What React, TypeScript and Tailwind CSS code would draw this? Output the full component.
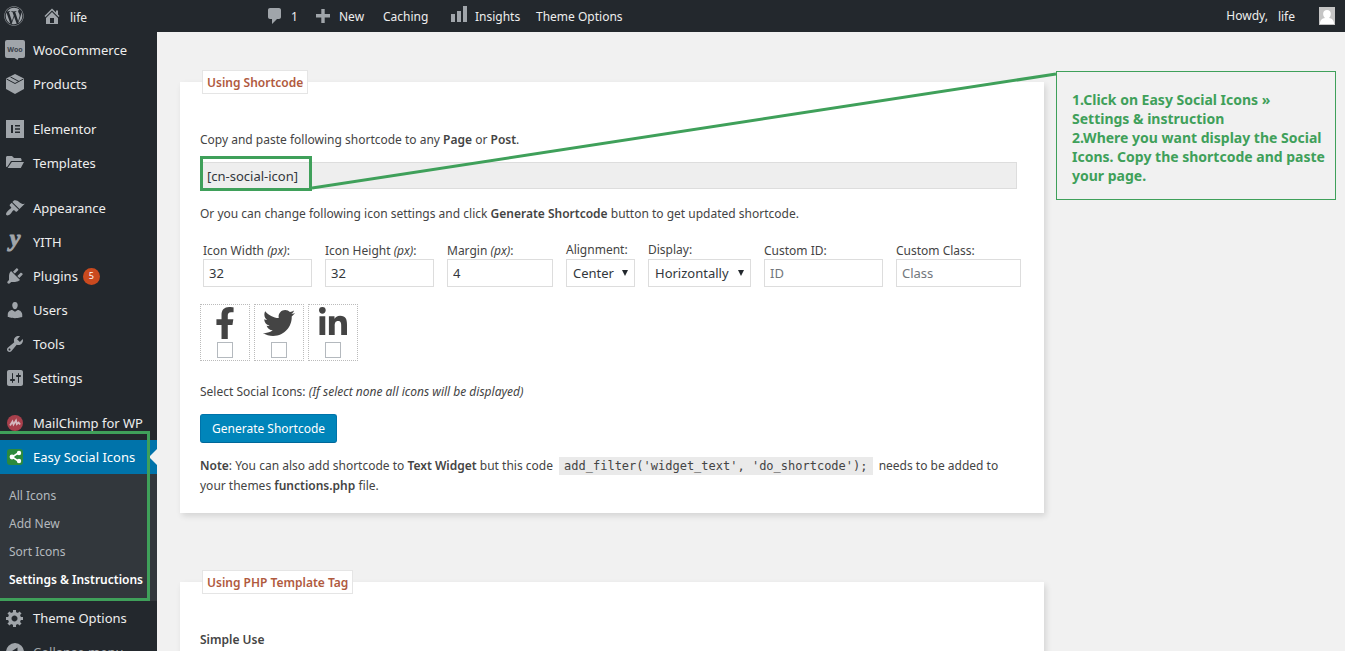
import React, { useState } from 'react';
import { FaFacebookF, FaTwitter, FaLinkedinIn, FaWordpress } from 'react-icons/fa';

const paths = {
  home: 'M16 8.5l1.53 1.53-1.06 1.06L10 4.6l-6.47 6.49-1.06-1.06L10 2.5l4 4v-2h2v4zm-6-2.46l6 5.99V18H4v-5.97zM12 17v-5H8v5h4z',
  comment: 'M5 2h9c1.1 0 2 .9 2 2v7c0 1.1-.9 2-2 2h-2l-5 5v-5H5c-1.1 0-2-.9-2-2V4c0-1.1.9-2 2-2z',
  plus: 'M17 8v3.5h-5.3V17H8.3v-5.5H3V8h5.3V3h3.4v5z',
  chart: 'M18 18V2h-4v16h4zm-6 0V7H8v11h4zm-6 0v-8H2v8h4z',
  appearance:
    'M14.48 11.06L7.41 3.99l1.5-1.5c.5-.56 2.3-.47 3.51.32 1.21.8 1.43 1.28 2.91 2.1 1.18.64 2.45 1.26 4.45.85zm-.71.71L6.7 4.7 4.93 6.47c-.39.39-.39 1.02 0 1.41l1.06 1.06c.39.39.39 1.03 0 1.42-.6.6-1.43 1.11-2.21 1.69-.35.26-.7.53-1.01.84C1.43 14.23.4 16.08 1.4 17.07c.99 1 2.84-.03 4.18-1.36.31-.31.58-.66.85-1.02.57-.78 1.08-1.61 1.69-2.21.39-.39 1.02-.39 1.41 0l1.06 1.06c.39.39 1.02.39 1.41 0z',
  plugins:
    'M13.11 4.36L9.87 7.6 8 5.73l3.24-3.24c.35-.34 1.05-.2 1.56.32.52.51.66 1.21.31 1.55zm-8 1.77l.91-1.12 9.01 9.01-1.19.84c-.71.71-2.63 1.16-3.82 1.16H6.14L4.9 17.26c-.59.59-1.54.59-2.12 0-.59-.58-.59-1.53 0-2.12l1.24-1.24v-3.88c0-1.13.4-3.19 1.09-3.89zm7.26 3.97l3.24-3.24c.34-.35 1.04-.21 1.55.31.52.51.66 1.21.31 1.55l-3.24 3.25z',
  users:
    'M10 9.25c-2.27 0-2.73-3.44-2.73-3.44C7 4.02 7.82 2 9.97 2c2.16 0 2.98 2.02 2.71 3.81 0 0-.41 3.44-2.68 3.44zm0 2.57L12.72 10c2.39 0 4.52 2.33 4.52 4.53v2.49s-3.65 1.13-7.24 1.13c-3.65 0-7.24-1.13-7.24-1.13v-2.49c0-2.25 1.94-4.48 4.47-4.48z',
  tools:
    'M16.68 9.77c-1.34 1.34-3.3 1.67-4.95.99l-5.41 6.52c-.99.99-2.59.99-3.58 0s-.99-2.59 0-3.57l6.52-5.42c-.68-1.65-.35-3.61.99-4.95 1.28-1.28 3.12-1.62 4.72-1.06l-2.89 2.89 2.82 2.82 2.86-2.87c.53 1.58.18 3.39-1.08 4.65zM3.81 16.21c.4.39 1.04.39 1.43 0 .4-.4.4-1.04 0-1.43-.39-.4-1.03-.4-1.43 0-.39.39-.39 1.03 0 1.43z',
  settings:
    'M18 16V4c0-1.1-.9-2-2-2H4c-1.1 0-2 .9-2 2v12c0 1.1.9 2 2 2h12c1.1 0 2-.9 2-2zM8 11h1c.55 0 1 .45 1 1s-.45 1-1 1H8v1.5c0 .28-.22.5-.5.5s-.5-.22-.5-.5V13H6c-.55 0-1-.45-1-1s.45-1 1-1h1V5.5c0-.28.22-.5.5-.5s.5.22.5.5V11zm5-2h-1c-.55 0-1-.45-1-1s.45-1 1-1h1V5.5c0-.28.22-.5.5-.5s.5.22.5.5V7h1c.55 0 1 .45 1 1s-.45 1-1 1h-1v5.5c0 .28-.22.5-.5.5s-.5-.22-.5-.5V9z',
  generic:
    'M18 12h-2.18c-.17.7-.44 1.35-.81 1.93l1.54 1.54-2.1 2.1-1.54-1.54c-.58.36-1.23.63-1.91.79V19H8v-2.18c-.68-.16-1.33-.43-1.91-.79l-1.54 1.54-2.12-2.12 1.54-1.54c-.36-.58-.63-1.23-.79-1.91H1V9.03h2.17c.16-.7.44-1.35.8-1.94L2.43 5.55l2.1-2.1 1.54 1.54c.58-.37 1.24-.64 1.93-.81V2h3v2.18c.68.16 1.33.43 1.91.79l1.54-1.54 2.12 2.12-1.54 1.54c.36.59.64 1.24.8 1.94H18V12zm-8.5 1.5c1.66 0 3-1.34 3-3s-1.34-3-3-3-3 1.34-3 3 1.34 3 3 3z',
  collapse: 'M10 1a9 9 0 1 0 0 18 9 9 0 0 0 0-18zm2.5 4.5v9L5.5 10z',
  folder: 'M1 4.500C1 3.700 1.600 3 2.500 3H7l2 2h6c.8 0 1.500.6 1.500 1.500V8H6L2.500 13.500 1 14zM6.800 9H19l-3.200 6H2.600z',
};

const Icon: React.FC<{ name: keyof typeof paths }> = ({ name }) => (
  <svg viewBox="0 0 20 20" className="w-5 h-5 shrink-0" fill="currentColor" fillRule="evenodd">
    <path d={paths[name]} />
  </svg>
);

const WooIcon = () => (
  <svg viewBox="0 0 20 20" className="w-5 h-5 shrink-0">
    <path d="M2 0h16a2 2 0 0 1 2 2v14a2 2 0 0 1-2 2h-4.500l-1 2-3-2H2a2 2 0 0 1-2-2V2a2 2 0 0 1 2-2z" fill="#a0a5aa" />
    <text x="10" y="11.500" textAnchor="middle" fontSize="7" fontWeight="700" fill="#3c434a">Woo</text>
  </svg>
);

const BoxIcon = () => (
  <svg viewBox="0 0 20 20" className="w-5 h-5 shrink-0">
    <path d="M10 0l9 4.500v10.500L10 20l-9-5V4.500z" fill="#a0a5aa" />
    <path d="M1.500 5L10 9.500l8.500-4.500M5.500 3l8.500 4.500" fill="none" stroke="#23282d" />
  </svg>
);

const ElementorIcon = () => (
  <svg viewBox="0 0 20 20" className="w-5 h-5 shrink-0">
    <path d="M1 1h18v18H1z" fill="#a0a5aa" />
    <path d="M6 6h2v8H6zM10 6h5v1.500h-5zM10 9.200h5v1.600h-5zM10 12.500h5V14h-5z" fill="#23282d" />
  </svg>
);

const YithIcon = () => (
  <svg viewBox="0 0 20 20" className="w-5 h-5 shrink-0">
    <text x="10" y="14" textAnchor="middle" fontSize="24" fontWeight="700" fontStyle="italic" fontFamily="Liberation Serif, serif" fill="#a0a5aa" stroke="#a0a5aa">y</text>
  </svg>
);

const MailChimpIcon = () => (
  <svg viewBox="0 0 20 20" className="w-5 h-5 shrink-0">
    <circle cx="10" cy="10" r="8" fill="#a8404c" />
    <path d="M5 12.500l2.500-4 1 3 2.500-4 .8 3.500 1.800-1.500 1.500 2" fill="none" stroke="#d5b9bf" strokeWidth="1.800" />
  </svg>
);

const ShareIcon = () => (
  <svg viewBox="0 0 20 20" className="w-5 h-5 shrink-0">
    <rect x="2" y="2" width="16" height="16" rx="3" fill="#2c8a3c" />
    <path d="M14 5.500L7 10l7 4.500" fill="none" stroke="#fff" strokeWidth="1.500" />
    <circle cx="14" cy="6" r="2.200" fill="#fff" />
    <circle cx="7" cy="10" r="2.400" fill="#fff" />
    <circle cx="14" cy="14" r="2.200" fill="#fff" />
  </svg>
);

interface MenuItem {
  label: string;
  icon: React.ReactNode;
  badge?: string;
}

const menuGroups: MenuItem[][] = [
  [
    { label: 'WooCommerce', icon: <WooIcon /> },
    { label: 'Products', icon: <BoxIcon /> },
  ],
  [
    { label: 'Elementor', icon: <ElementorIcon /> },
    { label: 'Templates', icon: <Icon name="folder" /> },
  ],
  [
    { label: 'Appearance', icon: <Icon name="appearance" /> },
    { label: 'YITH', icon: <YithIcon /> },
    { label: 'Plugins', icon: <Icon name="plugins" />, badge: '5' },
    { label: 'Users', icon: <Icon name="users" /> },
    { label: 'Tools', icon: <Icon name="tools" /> },
    { label: 'Settings', icon: <Icon name="settings" /> },
  ],
  [{ label: 'MailChimp for WP', icon: <MailChimpIcon /> }],
];

const submenu = ['All Icons', 'Add New', 'Sort Icons', 'Settings & Instructions'];

const MenuLink: React.FC<MenuItem> = ({ label, icon, badge }) => (
  <a href="#" className="flex items-center h-[34px] pl-[5px] gap-2 text-[13px] whitespace-nowrap text-[#eee]">
    <span className="text-[#a0a5aa]">{icon}</span>
    <span className="pt-0.5">{label}</span>
    {badge && (
      <span className="flex items-center justify-center w-[17px] h-[17px] -ml-[3px] rounded-full bg-[#ca4a1f] text-[9px] text-white">
        {badge}
      </span>
    )}
  </a>
);

const Sidebar = () => (
  <nav className="w-[157px] shrink-0 bg-[#23282d] pt-px">
    <div className="flex flex-col gap-[11px]">
      {menuGroups.map((group, i) => (
        <div key={i}>
          {group.map(item => (
            <MenuLink key={item.label} {...item} />
          ))}
        </div>
      ))}
    </div>
    <div className="relative">
      <a href="#" className="relative flex items-center h-[34px] pl-[5px] gap-2 text-[13px] whitespace-nowrap bg-[#0073aa] text-white">
        <ShareIcon />
        <span className="pt-0.5">Easy Social Icons</span>
        <span className="absolute right-0 top-[9px] border-y-8 border-r-8 border-y-transparent border-r-[#f1f1f1]" />
      </a>
      <ul className="bg-[#32373c] pt-2 pb-[7px] pl-[9px] text-[12px] leading-7 whitespace-nowrap">
        {submenu.map((label, i) => (
          <li key={label}>
            <a href="#" className={i === 3 ? 'font-semibold text-white' : 'text-[#b4b9be]'}>{label}</a>
          </li>
        ))}
      </ul>
      <div className="absolute left-0 right-[7px] -top-[9px] bottom-0 border-y-[3px] border-r-[3px] border-[#3fa05a] pointer-events-none" />
    </div>
    <MenuLink label="Theme Options" icon={<Icon name="generic" />} />
    <button type="button" className="flex items-center h-[34px] pl-[5px] gap-2 text-[13px] text-[#a0a5aa]">
      <Icon name="collapse" />
      <span className="pt-0.5">Collapse menu</span>
    </button>
  </nav>
);

const AdminBar = () => (
  <header className="flex items-center h-8 shrink-0 bg-[#23282d] text-[#eee] text-[12px] pl-1 pr-2.5 whitespace-nowrap">
    <a href="#" aria-label="WordPress" className="text-[#a0a5aa]"><FaWordpress className="w-5 h-5" /></a>
    <a href="#" className="flex items-center gap-2 ml-[18px] w-[223px]">
      <span className="text-[#a0a5aa]"><Icon name="home" /></span>
      <span className="pt-1">life</span>
    </a>
    <a href="#" className="flex items-center gap-1.5 w-[48px]">
      <span className="text-[#a0a5aa]"><Icon name="comment" /></span>
      <span className="pt-0.5">1</span>
    </a>
    <a href="#" className="flex items-center gap-[6px] w-[70px]">
      <span className="text-[#a0a5aa]"><Icon name="plus" /></span>
      <span className="pt-0.5">New</span>
    </a>
    <a href="#" className="w-[66px] pt-0.5">Caching</a>
    <a href="#" className="flex items-center gap-1.5 w-[87px]">
      <span className="text-[#a0a5aa] pb-1"><Icon name="chart" /></span>
      <span className="pt-0.5">Insights</span>
    </a>
    <a href="#" className="pt-0.5">Theme Options</a>
    <a href="#" className="flex items-center ml-auto">
      Howdy,<span className="ml-2.5 mr-6 pt-0.5">life</span>
      <svg viewBox="0 0 16 18" className="w-4 h-[18px]">
        <path d="M0 0h16v18H0z" fill="#c5c5c5" />
        <path d="M8 3c5 0 4.500 6 2 8 3 .5 5 2 5 6H1c0-4 2-5.500 5-6-2.500-2-3-8 2-8z" fill="#fff" />
      </svg>
    </a>
  </header>
);

interface PanelProps {
  title: string;
  children: React.ReactNode;
}

const Panel: React.FC<PanelProps> = ({ title, children }) => (
  <section className="bg-white px-5 pb-[17px] shadow-[2px_3px_6px_rgba(0,0,0,0.12)]">
    <h2 className="w-fit -mt-3 ml-0.5 px-1 pt-0.5 border border-[#e5e5e5] bg-white text-[12px] leading-5 font-semibold text-[#b05a3e]">
      {title}
    </h2>
    {children}
  </section>
);

const fieldClass = 'h-7 border border-[#ddd] bg-white text-[13px] text-[#32373c] outline-none placeholder:text-[#72777c]';

interface FieldProps {
  id: string;
  label: string;
  px?: boolean;
  value?: string;
  placeholder?: string;
  width: string;
}

const Field: React.FC<FieldProps> = ({ id, label, px, value, placeholder, width }) => (
  <div className="flex flex-col">
    <label htmlFor={id} className="pt-0.5 leading-4 whitespace-nowrap">
      {label}{px && <i> (px)</i>}:
    </label>
    <input id={id} type="text" defaultValue={value} placeholder={placeholder} className={`${fieldClass} px-[5px] ${width}`} />
  </div>
);

interface SelectFieldProps {
  id: string;
  label: string;
  options: string[];
  width: string;
}

const SelectField: React.FC<SelectFieldProps> = ({ id, label, options, width }) => (
  <div className="flex flex-col">
    <label htmlFor={id} className="leading-[18px]">{label}:</label>
    <div className={`relative ${width}`}>
      <select id={id} className={`${fieldClass} pl-1.5 w-full appearance-none`}>
        {options.map(o => <option key={o}>{o}</option>)}
      </select>
      <svg viewBox="0 0 6 6" className="absolute right-[7px] top-[11px] w-1.5 h-1.5 pointer-events-none">
        <path d="M0 0h6L3 6z" fill="#23282d" />
      </svg>
    </div>
  </div>
);

const socials = [
  { name: 'Facebook', icon: <FaFacebookF className="w-8 h-8" /> },
  { name: 'Twitter', icon: <FaTwitter className="w-8 h-8" /> },
  { name: 'LinkedIn', icon: <FaLinkedinIn className="w-8 h-8" /> },
];

const ShortcodePanel = () => {
  const [selected, setSelected] = useState<string[]>([]);

  const toggle = (name: string) => {
    setSelected(selected.includes(name) ? selected.filter(s => s !== name) : [...selected, name]);
  };

  return (
    <Panel title="Using Shortcode">
      <p className="mt-9">
        Copy and paste following shortcode to any <b className="font-semibold">Page</b> or <b className="font-semibold">Post</b>.
      </p>
      <div className="relative mt-3 mr-[7px]">
        <input
          type="text"
          readOnly
          aria-label="Shortcode"
          value="[cn-social-icon]"
          className="block w-full h-[27px] px-1.5 border border-[#ddd] bg-[#eee] text-[13px] text-[#32373c] outline-none"
        />
        <div className="absolute left-0 -top-1.5 w-28 h-[35px] border-[3px] border-[#3fa05a] pointer-events-none" />
      </div>
      <p className="mt-[15px]">
        Or you can change following icon settings and click <b className="font-semibold">Generate Shortcode</b> button to get updated shortcode.
      </p>
      <div className="flex gap-[13px] mt-[17px] ml-[3px]">
        <Field id="width" label="Icon Width" px value="32" width="w-[109px]" />
        <Field id="height" label="Icon Height" px value="32" width="w-[109px]" />
        <Field id="margin" label="Margin" px value="4" width="w-[106px]" />
        <SelectField id="alignment" label="Alignment" options={['Center', 'Left', 'Right']} width="w-[69px]" />
        <SelectField id="display" label="Display" options={['Horizontally', 'Vertically']} width="w-[103px]" />
        <Field id="custom-id" label="Custom ID" placeholder="ID" width="w-[119px]" />
        <Field id="custom-class" label="Custom Class" placeholder="Class" width="w-[125px]" />
      </div>
      <div className="flex gap-1 mt-[17px]">
        {socials.map(s => (
          <label key={s.name} className="flex flex-col items-center gap-[3px] w-[50px] h-[57px] pt-0.5 border border-dotted border-[#bbb] text-[#444]">
            {s.icon}
            <input
              type="checkbox"
              aria-label={s.name}
              checked={selected.includes(s.name)}
              onChange={() => toggle(s.name)}
              className="appearance-none w-4 h-4 border border-[#b4b9be] bg-white checked:bg-[#0085ba]"
            />
          </label>
        ))}
      </div>
      <p className="mt-[21px]">
        Select Social Icons: <i>(If select none all icons will be displayed)</i>
      </p>
      <button
        type="button"
        className="block mt-3 h-[29px] px-[11px] rounded-[3px] border border-[#0073aa] border-b-[#006799] bg-[#0085ba] text-[12px] whitespace-nowrap text-white"
      >
        Generate Shortcode
      </button>
      <p className="mt-[13px] pr-6">
        <b className="font-semibold">Note</b>: You can also add shortcode to <b className="font-semibold">Text Widget</b> but this code{' '}
        <code className="mx-[3px] px-[5px] py-0.5 bg-[#eaeaea] text-[12px] font-['DejaVu_Sans_Mono',monospace]">
          add_filter('widget_text', 'do_shortcode');
        </code>{' '}
        needs to be added to your themes <b className="font-semibold">functions.php</b> file.
      </p>
    </Panel>
  );
};

export default function App() {
  return (
    <div className="flex flex-col h-screen overflow-hidden bg-[#f1f1f1] font-['Noto_Sans',sans-serif]">
      <AdminBar />
      <div className="flex flex-1 min-h-0">
        <Sidebar />
        <main className="relative flex flex-1 items-start gap-3 pl-[23px] pr-[9px] pt-[39px] min-w-0">
          <div className="flex flex-1 flex-col gap-[69px] mt-[11px] text-[12px] leading-5 text-[#444]">
            <ShortcodePanel />
            <Panel title="Using PHP Template Tag">
              <h3 className="mt-9 font-semibold">Simple Use</h3>
            </Panel>
          </div>
          <aside className="w-[280px] shrink-0 h-[129px] pt-[18px] pl-[15px] border border-[#3fa05a] text-[14px] leading-[19px] font-bold text-[#3fa05a]">
            <p>1.Click on Easy Social Icons »<br />Settings &amp; instruction</p>
            <p>2.Where you want display the Social Icons. Copy the shortcode and paste your page.</p>
          </aside>
          <svg className="absolute right-[289px] top-10 w-[744px] h-[120px] pointer-events-none" viewBox="0 0 744 120">
            <path d="M0 116L744 2" stroke="#3fa05a" strokeWidth="3" />
          </svg>
        </main>
      </div>
    </div>
  );
}
